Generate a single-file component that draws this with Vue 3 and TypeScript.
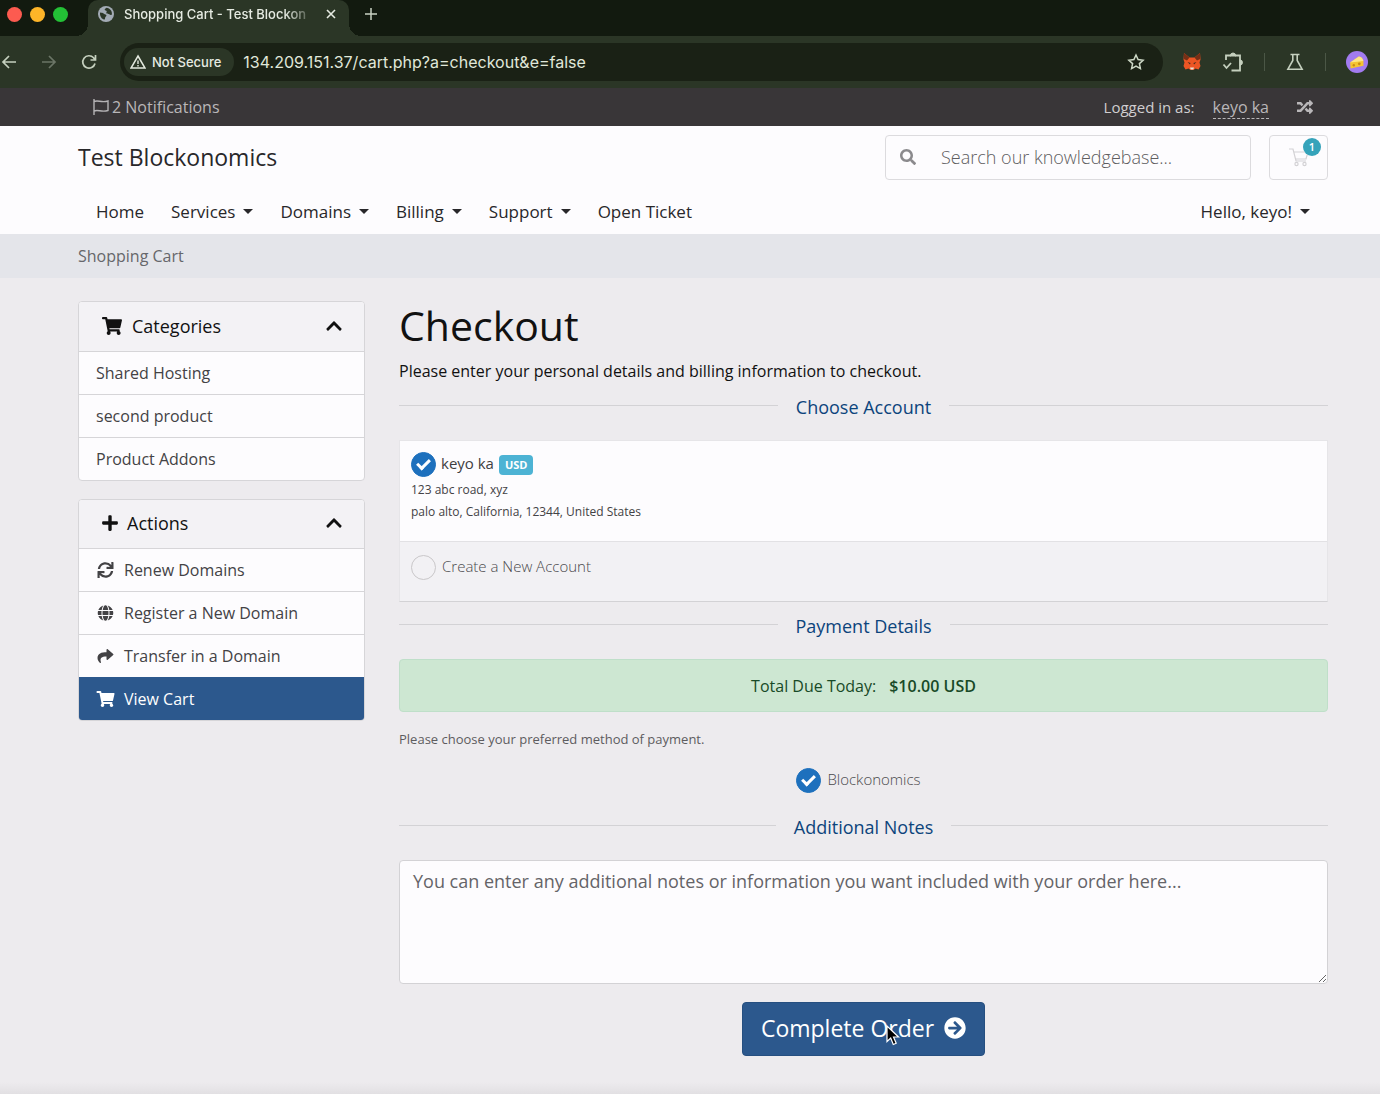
<script setup lang="ts">
import { ref } from 'vue'

interface Glyph {
  box: string
  d: string
}

interface NavItem {
  label: string
  menu: boolean
}

interface ActionItem {
  label: string
  icon: string
  active: boolean
}

const glyphs: Record<string, Glyph> = {
  cart: {
    box: '0 0 576 512',
    d: 'M528.12 301.319l47.273-208C578.806 78.301 567.391 64 551.99 64H159.208l-9.166-44.81C147.758 8.021 137.93 0 126.529 0H24C10.745 0 0 10.745 0 24v16c0 13.255 10.745 24 24 24h69.883l70.248 343.435C147.325 417.1 136 435.222 136 456c0 30.928 25.072 56 56 56s56-25.072 56-56c0-15.674-6.447-29.835-16.824-40h209.647C430.447 426.165 424 440.326 424 456c0 30.928 25.072 56 56 56s56-25.072 56-56c0-22.172-12.888-41.332-31.579-50.405l5.517-24.276c3.413-15.018-8.002-29.319-23.403-29.319H218.117l-6.545-32h293.145c11.206 0 20.92-7.754 23.403-18.681z',
  },
  plus: {
    box: '0 0 448 512',
    d: 'M416 208H272V64c0-17.67-14.33-32-32-32h-32c-17.67 0-32 14.33-32 32v144H32c-17.67 0-32 14.33-32 32v32c0 17.67 14.33 32 32 32h144v144c0 17.67 14.33 32 32 32h32c17.67 0 32-14.33 32-32V304h144c17.67 0 32-14.33 32-32v-32c0-17.67-14.33-32-32-32z',
  },
  chevron: {
    box: '0 0 448 512',
    d: 'M240.971 130.524l194.343 194.343c9.373 9.373 9.373 24.569 0 33.941l-22.667 22.667c-9.357 9.357-24.522 9.375-33.901.04L224 227.495 69.255 381.516c-9.379 9.335-24.544 9.317-33.901-.04l-22.667-22.667c-9.373-9.373-9.373-24.569 0-33.941L207.03 130.525c9.372-9.373 24.568-9.373 33.941-.001z',
  },
  sync: {
    box: '0 0 512 512',
    d: 'M440.65 12.57l4 82.77A247.16 247.16 0 0 0 255.83 8C134.73 8 33.91 94.92 12.29 209.82A12 12 0 0 0 24.09 224h49.05a12 12 0 0 0 11.67-9.26 175.91 175.91 0 0 1 317-56.94l-101.46-4.86a12 12 0 0 0-12.57 12v47.41a12 12 0 0 0 12 12H500a12 12 0 0 0 12-12V12a12 12 0 0 0-12-12h-47.37a12 12 0 0 0-11.98 12.57zM255.83 432a175.61 175.61 0 0 1-146-77.8l101.8 4.87a12 12 0 0 0 12.57-12v-47.4a12 12 0 0 0-12-12H12a12 12 0 0 0-12 12V500a12 12 0 0 0 12 12h47.35a12 12 0 0 0 12-12.6l-4.15-82.57A247.17 247.17 0 0 0 255.83 504c121.11 0 221.93-86.92 243.55-201.82a12 12 0 0 0-11.8-14.18h-49.05a12 12 0 0 0-11.67 9.26A175.86 175.86 0 0 1 255.83 432z',
  },
  globe: {
    box: '0 0 496 512',
    d: 'M336.5 160C322 70.7 287.8 8 248 8s-74 62.7-88.5 152h177zM152 256c0 22.2 1.2 43.5 3.3 64h185.3c2.1-20.5 3.3-41.8 3.3-64s-1.2-43.5-3.3-64H155.3c-2.1 20.5-3.3 41.8-3.3 64zm324.7-96c-28.6-67.9-86.5-120.4-158-141.6 24.4 33.8 41.2 84.7 50 141.6h108zM177.2 18.4C105.8 39.6 47.8 92.1 19.3 160h108c8.7-56.9 25.5-107.8 49.9-141.6zM487.4 192H372.7c2.1 21 3.3 42.5 3.3 64s-1.2 43-3.3 64h114.6c5.5-20.5 8.6-41.8 8.6-64s-3.1-43.5-8.5-64zM120 256c0-21.5 1.2-43 3.3-64H8.6C3.2 212.5 0 233.8 0 256s3.2 43.5 8.6 64h114.6c-2-21-3.2-42.5-3.2-64zm39.5 96c14.5 89.3 48.7 152 88.5 152s74-62.7 88.5-152h-177zm159.3 141.6c71.4-21.2 129.4-73.7 158-141.6h-108c-8.8 56.9-25.6 107.8-50 141.6zM19.3 352c28.6 67.9 86.5 120.4 158 141.6-24.4-33.8-41.2-84.7-50-141.6h-108z',
  },
  share: {
    box: '0 0 512 512',
    d: 'M503.691 189.836L327.687 37.851C312.281 24.546 288 35.347 288 56.015v80.053C127.371 137.907 0 170.1 0 322.326c0 61.441 39.581 122.309 83.333 154.132 13.653 9.931 33.111-2.533 28.077-18.631C66.066 312.814 132.917 274.316 288 272.085V360c0 20.7 24.3 31.453 39.687 18.164l176.004-152c11.071-9.562 11.086-26.753 0-36.328z',
  },
  search: {
    box: '0 0 512 512',
    d: 'M505 442.7L405.3 343c-4.5-4.5-10.6-7-17-7H372c27.6-35.3 44-79.7 44-128C416 93.1 322.9 0 208 0S0 93.1 0 208s93.1 208 208 208c48.3 0 92.7-16.4 128-44v16.3c0 6.4 2.5 12.5 7 17l99.7 99.7c9.4 9.4 24.6 9.4 33.9 0l28.3-28.3c9.4-9.4 9.4-24.6.1-34zM208 336c-70.7 0-128-57.2-128-128 0-70.7 57.2-128 128-128 70.7 0 128 57.2 128 128 0 70.7-57.2 128-128 128z',
  },
  random: {
    box: '0 0 512 512',
    d: 'M504.971 359.029c9.373 9.373 9.373 24.569 0 33.941l-80 79.984c-15.01 15.01-40.971 4.49-40.971-16.971V416h-58.785a12.004 12.004 0 0 1-8.773-3.812l-70.556-75.596 53.333-57.143L352 336h32v-39.981c0-21.438 25.943-31.998 40.971-16.971l80 79.981zM12 176h84l52.781 56.551 53.333-57.143-70.556-75.596A11.999 11.999 0 0 0 122.785 96H12c-6.627 0-12 5.373-12 12v56c0 6.627 5.373 12 12 12zm372 0v39.984c0 21.46 25.961 31.98 40.971 16.971l80-79.984c9.373-9.373 9.373-24.569 0-33.941l-80-79.981C409.943 24.021 384 34.582 384 56.019V96h-58.785a12.004 12.004 0 0 0-8.773 3.812L96 336H12c-6.627 0-12 5.373-12 12v56c0 6.627 5.373 12 12 12h110.785c3.326 0 6.503-1.381 8.773-3.812L352 176h32z',
  },
  arrow: {
    box: '0 0 512 512',
    d: 'M256 8c137 0 248 111 248 248S393 504 256 504 8 393 8 256 119 8 256 8zm-28.9 143.6l75.5 72.4H120c-13.3 0-24 10.7-24 24v16c0 13.3 10.7 24 24 24h182.6l-75.5 72.4c-9.7 9.3-9.9 24.8-.4 34.3l11 10.9c9.4 9.4 24.6 9.4 33.9 0L404.3 273c9.4-9.4 9.4-24.6 0-33.9L271.6 106.3c-9.4-9.4-24.6-9.4-33.9 0l-11 10.9c-9.5 9.6-9.3 25.1.4 34.4z',
  },
}

const navItems: NavItem[] = [
  { label: 'Home', menu: false },
  { label: 'Services', menu: true },
  { label: 'Domains', menu: true },
  { label: 'Billing', menu: true },
  { label: 'Support', menu: true },
  { label: 'Open Ticket', menu: false },
]

const categories: string[] = ['Shared Hosting', 'second product', 'Product Addons']

const actions: ActionItem[] = [
  { label: 'Renew Domains', icon: 'sync', active: false },
  { label: 'Register a New Domain', icon: 'globe', active: false },
  { label: 'Transfer in a Domain', icon: 'share', active: false },
  { label: 'View Cart', icon: 'cart', active: true },
]

const address = ref('134.209.151.37/cart.php?a=checkout&e=false')
const search = ref('')
const notes = ref('')
const account = ref('existing')
const payment = ref('blockonomics')
</script>

<template>
  <div class="window">
    <header class="browser">
      <div class="tabstrip">
        <div class="lights">
          <span class="light red"></span>
          <span class="light amber"></span>
          <span class="light green"></span>
        </div>
        <div class="tab">
          <svg class="favicon" viewBox="0 0 16 16" aria-hidden="true">
            <circle cx="8" cy="8" r="8" fill="#a3abb5" />
            <path d="M2 6.500c1.500.3 3 .2 4 1.300.8.9 2.200.4 2.400 1.400.2 1-1.200 1.300-1.200 2.300 0 .9-.3 1.500-.9 2.200C3.800 13 1.700 10.500 2 6.500zM8.500 1.800c-.9.9-2 1-1.800 2 .2.900 1.700.5 2 1.500.2.900-.7 1.300-.3 2 .6.900 2 .2 2.900 1 .7.6 1.300.7 2.600.5C14.400 5 12 2.200 8.500 1.800z" fill="#2c3728" />
          </svg>
          <span class="tab-title">Shopping Cart - Test Blockon</span>
          <button class="plain" type="button" aria-label="Close tab">
            <svg class="i12" viewBox="0 0 12 12" aria-hidden="true"><path d="M2 2l8 8M10 2l-8 8" fill="none" stroke="#e6ebe2" stroke-width="1.600" /></svg>
          </button>
        </div>
        <button class="plain new-tab" type="button" aria-label="New tab">
          <svg class="i12" viewBox="0 0 12 12" aria-hidden="true"><path d="M6 0v12M0 6h12" fill="none" stroke="#c9d2c4" stroke-width="1.500" /></svg>
        </button>
      </div>

      <div class="toolbar">
        <div class="history">
          <button class="plain" type="button" aria-label="Back">
            <svg class="i18" viewBox="0 0 18 18" aria-hidden="true"><path d="M16 9H3M9 3L3 9l6 6" fill="none" stroke="#c5d0be" stroke-width="1.700" /></svg>
          </button>
          <button class="plain" type="button" aria-label="Forward">
            <svg class="i18" viewBox="0 0 18 18" aria-hidden="true"><path d="M2 9h13M9 3l6 6-6 6" fill="none" stroke="#6b7566" stroke-width="1.700" /></svg>
          </button>
          <button class="plain" type="button" aria-label="Reload">
            <svg class="i18" viewBox="0 0 18 18" aria-hidden="true"><path d="M15 10.500A6.200 6.200 0 1 1 13.600 4.800L15.300 6.600M15.500 2v5h-5" fill="none" stroke="#c5d0be" stroke-width="1.700" /></svg>
          </button>
        </div>

        <div class="omnibox">
          <button class="plain secure" type="button">
            <svg class="i16" viewBox="0 0 16 16" aria-hidden="true">
              <path d="M8 2L15 14H1z" fill="none" stroke="#e3e9de" stroke-width="1.500" />
              <path d="M8 6.500v3.600M8 11v1.500" stroke="#e3e9de" stroke-width="1.400" />
            </svg>
            Not Secure
          </button>
          <input v-model="address" class="address" type="text" aria-label="Address" />
          <button class="plain" type="button" aria-label="Bookmark">
            <svg class="i18" viewBox="0 0 18 18" aria-hidden="true"><path d="M9 2l2.100 4.600 5 .6-3.700 3.400 1 5L9 13.100l-4.400 2.500 1-5L1.900 7.200l5-.6z" fill="none" stroke="#cdd8c6" stroke-width="1.500" /></svg>
          </button>
        </div>

        <div class="extensions">
          <svg class="i20" viewBox="0 0 20 20" aria-hidden="true">
            <path d="M2 1l5.500 4.500h5L18 1l.5 6.500-1 3 1 3.500-2 3.500-3-1-2 1.500h-3l-2-1.500-3 1-2-3.500 1-3.500-1-3z" fill="#ec5524" />
            <path d="M2 1l5.500 4.500L5 8.500 1.800 7zM18 1l-5.500 4.500L15 8.500 18.200 7z" fill="#762f16" />
            <path d="M5.500 10l3 1-.5 1.500zM14.500 10l-3 1 .5 1.500z" fill="#3b2a20" />
            <path d="M8 15.500h4l-.7 2H8.700z" fill="#e8e3da" />
          </svg>
          <svg class="i22" viewBox="0 0 22 22" aria-hidden="true">
            <path d="M4 9V4.500h4.700M13.300 4.500H18V9M18 14v5.500H9.500" fill="none" stroke="#c5d0be" stroke-width="1.800" />
            <path d="M8.500 4.500a2.500 2.500 0 0 1 5 0zM18 9a2.500 2.500 0 0 1 0 5z" fill="#c5d0be" stroke="#c5d0be" />
            <path d="M8 4.500h6M18 8.500v6" fill="none" stroke="#c5d0be" stroke-width="1.800" />
            <path d="M1.500 13.500l3 3.500 4.500-5" fill="none" stroke="#c5d0be" stroke-width="1.800" />
          </svg>
          <span class="rule"></span>
          <svg class="i20" viewBox="0 0 20 20" aria-hidden="true">
            <path d="M5.500 2.500h9M7.800 2.500v6L2.900 17.200h14.200L12.200 8.500v-6" fill="none" stroke="#c5d0be" stroke-width="1.600" />
          </svg>
          <span class="rule"></span>
          <svg class="i22" viewBox="0 0 24 24" aria-hidden="true">
            <circle cx="12" cy="12" r="12" fill="#a27bf0" />
            <path d="M4.500 12.500L14 6c3 .5 4.500 2.500 5 5v5L5 19z" fill="#f5c431" />
            <path d="M4.500 12.500L14 6c3 .5 4.500 2.500 5 5z" fill="#fce588" />
            <circle cx="8.500" cy="15.500" r="1.300" fill="#c98a17" />
            <circle cx="14.500" cy="14" r="1.500" fill="#c98a17" />
          </svg>
        </div>
      </div>
    </header>

    <div class="topbar">
      <a class="notifications" href="#">
        <svg class="i16" viewBox="0 0 16 16" aria-hidden="true"><path d="M1 0v16M1 2.500c4-2 7 1.500 14-.5v9.500c-7 2-10-1.500-14 .5" fill="none" stroke="#b5b3b5" stroke-width="1.400" /></svg>
        2 Notifications
      </a>
      <div class="session">
        <span>Logged in as:</span>
        <a class="user" href="#">keyo ka</a>
        <a class="switch" href="#" aria-label="Switch account">
          <svg class="i16" :viewBox="glyphs.random.box" aria-hidden="true"><path :d="glyphs.random.d" /></svg>
        </a>
      </div>
    </div>

    <div class="masthead">
      <div class="brand-row">
        <a class="brand" href="#">Test Blockonomics</a>
        <form class="search" @submit.prevent>
          <svg class="i16" :viewBox="glyphs.search.box" aria-hidden="true"><path :d="glyphs.search.d" /></svg>
          <input v-model="search" type="text" placeholder="Search our knowledgebase..." aria-label="Search our knowledgebase" />
        </form>
        <a class="cart-button" href="#" aria-label="Shopping cart">
          <svg class="i20" viewBox="0 0 20 20" aria-hidden="true">
            <path d="M0 2h4l3 12h10M4.700 5H19l-2 7H6.500" fill="none" stroke="#d3d2d5" stroke-width="1.200" />
            <circle cx="7.500" cy="17" r="1.600" fill="none" stroke="#d3d2d5" stroke-width="1.200" />
            <circle cx="15.500" cy="17" r="1.600" fill="none" stroke="#d3d2d5" stroke-width="1.200" />
          </svg>
          <span class="count">1</span>
        </a>
      </div>
      <nav class="nav">
        <a v-for="item in navItems" :key="item.label" href="#" :class="{ menu: item.menu }">{{ item.label }}</a>
        <a class="menu hello" href="#">Hello, keyo!</a>
      </nav>
    </div>

    <div class="breadcrumb">Shopping Cart</div>

    <div class="content">
      <aside class="sidebar">
        <section class="card">
          <h2 class="card-head">
            <svg class="i20" :viewBox="glyphs.cart.box" aria-hidden="true"><path :d="glyphs.cart.d" /></svg>
            Categories
            <svg class="i18 chevron" :viewBox="glyphs.chevron.box" aria-hidden="true"><path :d="glyphs.chevron.d" /></svg>
          </h2>
          <a v-for="name in categories" :key="name" class="item" href="#">{{ name }}</a>
        </section>

        <section class="card">
          <h2 class="card-head tight">
            <svg class="i18" :viewBox="glyphs.plus.box" aria-hidden="true"><path :d="glyphs.plus.d" /></svg>
            Actions
            <svg class="i18 chevron" :viewBox="glyphs.chevron.box" aria-hidden="true"><path :d="glyphs.chevron.d" /></svg>
          </h2>
          <a v-for="item in actions" :key="item.label" class="item" :class="{ active: item.active }" href="#">
            <svg class="item-icon" :viewBox="glyphs[item.icon].box" aria-hidden="true"><path :d="glyphs[item.icon].d" /></svg>
            {{ item.label }}
          </a>
        </section>
      </aside>

      <main class="main">
        <h1>Checkout</h1>
        <p class="lead">Please enter your personal details and billing information to checkout.</p>

        <h3 class="heading">Choose Account</h3>
        <div class="accounts">
          <label class="account chosen">
            <span class="choice">
              <input v-model="account" class="radio" type="radio" name="account" value="existing" />
              <span class="choice-text">keyo ka</span>
              <span class="currency">USD</span>
            </span>
            <span class="place">123 abc road, xyz</span>
            <span class="place">palo alto, California, 12344, United States</span>
          </label>
          <label class="account create">
            <span class="choice">
              <input v-model="account" class="radio" type="radio" name="account" value="new" />
              <span class="choice-text">Create a New Account</span>
            </span>
          </label>
        </div>

        <h3 class="heading">Payment Details</h3>
        <div class="total">Total Due Today: <strong>$10.00 USD</strong></div>
        <p class="hint">Please choose your preferred method of payment.</p>
        <label class="choice gateway">
          <input v-model="payment" class="radio" type="radio" name="payment" value="blockonomics" />
          <span class="choice-text">Blockonomics</span>
        </label>

        <h3 class="heading">Additional Notes</h3>
        <textarea v-model="notes" class="notes" aria-label="Additional notes" placeholder="You can enter any additional notes or information you want included with your order here..."></textarea>

        <button class="complete" type="button">
          Complete Order
          <svg class="i22" :viewBox="glyphs.arrow.box" aria-hidden="true"><path :d="glyphs.arrow.d" /></svg>
          <svg class="pointer" viewBox="0 0 14 21" aria-hidden="true">
            <path d="M1 1v15.500l3.700-3.500 2.600 6.500 2.900-1.200-2.700-6.300h5z" fill="#000" stroke="#fff" stroke-width="1.200" />
          </svg>
        </button>
      </main>
    </div>
  </div>
</template>

<style>
body {
  margin: 0;
  background: #edebee;
}
</style>

<style scoped>
* {
  box-sizing: border-box;
}

.window {
  min-height: 100vh;
  background: linear-gradient(to top, #e2e0e3, #edebee 12px);
  color: #111;
  font-family: 'Open Sans', 'Noto Sans', sans-serif;
  font-size: 16px;
  line-height: 24px;
}

a {
  color: inherit;
  text-decoration: none;
}

svg {
  display: block;
  flex: none;
  fill: currentColor;
}

.i12 { width: 12px; height: 12px; }
.i16 { width: 16px; height: 16px; }
.i18 { width: 18px; height: 18px; }
.i20 { width: 20px; height: 20px; }
.i22 { width: 22px; height: 22px; }

.plain {
  padding: 0;
  border: 0;
  background: none;
  color: inherit;
  font: inherit;
}

/* Browser chrome */
.browser {
  color: #e6ebe2;
  font-family: Inter, 'Liberation Sans', sans-serif;
}

.tabstrip {
  display: flex;
  height: 36px;
  background: #121a0f;
}

.lights {
  display: flex;
  gap: 8px;
  padding: 7px 20px 0 7px;
}

.light {
  width: 15px;
  height: 15px;
  border-radius: 50%;
}

.red { background: #fc5b50; }
.amber { background: #fdb528; }
.green { background: #23c136; }

.tab {
  position: relative;
  display: flex;
  gap: 10px;
  align-items: center;
  width: 261px;
  padding: 0 12px 8px 10px;
  border-radius: 10px 10px 0 0;
  background: #2b3626;
}

.tab::before,
.tab::after {
  position: absolute;
  bottom: 0;
  width: 12px;
  height: 12px;
  content: '';
}

.tab::before {
  right: 100%;
  background: radial-gradient(circle at 0 0, transparent 12px, #2b3626 12px);
}

.tab::after {
  left: 100%;
  background: radial-gradient(circle at 100% 0, transparent 12px, #2b3626 12px);
}

.favicon {
  width: 16px;
  height: 16px;
}

.tab-title {
  flex: 1;
  font-size: 13px;
  font-weight: 500;
  white-space: nowrap;
  mask-image: linear-gradient(to left, transparent, #000 30px);
}

.new-tab {
  padding: 0 16px 8px;
}

.toolbar {
  display: flex;
  align-items: center;
  height: 52px;
  padding: 0 12px 0 0;
  background: #2b3626;
}

.history {
  display: flex;
  gap: 22px;
  width: 120px;
}

.omnibox {
  display: flex;
  flex: 1;
  align-items: center;
  height: 38px;
  padding: 0 18px 0 4px;
  border-radius: 19px;
  background: #1a2115;
}

.secure {
  display: flex;
  gap: 6px;
  align-items: center;
  height: 28px;
  padding: 0 13px 0 6px;
  border-radius: 14px;
  background: #2b3626;
  font-size: 13px;
  font-weight: 500;
}

.address {
  flex: 1;
  min-width: 0;
  padding: 0 9px;
  border: 0;
  outline: 0;
  background: none;
  color: #e0e8da;
  font: inherit;
}

.extensions {
  display: flex;
  gap: 20px;
  align-items: center;
  padding-left: 19px;
}

.rule {
  width: 1px;
  height: 18px;
  background: #4b5746;
}

/* Site header */
.topbar {
  display: flex;
  align-items: center;
  justify-content: space-between;
  height: 38px;
  padding: 0 67px 0 93px;
  background: #393638;
  color: #b9b7b9;
}

.notifications {
  display: flex;
  gap: 3px;
  align-items: center;
}

.session {
  display: flex;
  gap: 18px;
  align-items: center;
}

.session span {
  color: #d0ced0;
  font-size: 15px;
}

.user {
  border-bottom: 1px dashed #b9b7b9;
  line-height: 22px;
}

.switch {
  margin-left: 10px;
}

.masthead {
  background: #fdfcfe;
  color: #28272a;
}

.brand-row {
  display: flex;
  gap: 18px;
  align-items: center;
  height: 63px;
  padding: 0 52px 1px 78px;
}

.brand {
  flex: 1;
  font-size: 23px;
}

.search {
  display: flex;
  gap: 25px;
  align-items: center;
  width: 366px;
  height: 45px;
  padding: 0 14px;
  border: 1px solid #dcdbde;
  border-radius: 4px;
  color: #8b8a8d;
}

.search input {
  flex: 1;
  min-width: 0;
  padding: 0;
  border: 0;
  outline: 0;
  background: none;
  font: inherit;
  font-size: 18px;
}

.search input::placeholder {
  color: #5e5d60;
  font-weight: 300;
  opacity: 1;
}

.cart-button {
  position: relative;
  display: flex;
  align-items: center;
  justify-content: center;
  width: 59px;
  height: 45px;
  border: 1px solid #dcdbde;
  border-radius: 4px;
}

.count {
  position: absolute;
  top: 2px;
  right: 6px;
  width: 18px;
  height: 18px;
  border-radius: 50%;
  background: #35a3ba;
  color: #fff;
  font-size: 11px;
  font-weight: 600;
  line-height: 18px;
  text-align: center;
}

.nav {
  display: flex;
  gap: 27px;
  align-items: center;
  height: 45px;
  padding: 0 70px 0 96px;
  font-size: 17px;
}

.menu {
  display: flex;
  gap: 8px;
  align-items: center;
}

.menu::after {
  border: 5px solid transparent;
  border-top-color: currentColor;
  border-bottom: 0;
  content: '';
}

.hello {
  margin-left: auto;
}

.breadcrumb {
  height: 44px;
  padding-left: 78px;
  background: #e4e5ea;
  color: #66676b;
  line-height: 45px;
}

/* Columns */
.content {
  display: flex;
  gap: 34px;
  align-items: flex-start;
  padding: 23px 52px 38px 78px;
}

.sidebar {
  flex: none;
  width: 287px;
}

.card {
  overflow: hidden;
  margin-bottom: 18px;
  border: 1px solid #d6d5d8;
  border-radius: 4px;
  background: #fdfcfe;
}

.card-head {
  display: flex;
  gap: 10px;
  align-items: center;
  height: 49px;
  margin: 0;
  padding: 0 21px 2px 23px;
  background: #f3f2f5;
  font-size: 18px;
  font-weight: 400;
}

.tight {
  gap: 8px;
  height: 48px;
  padding-left: 22px;
}

.chevron {
  margin-left: auto;
}

.item {
  display: flex;
  gap: 9px;
  align-items: center;
  height: 43px;
  padding: 0 17px;
  border-top: 1px solid #d6d5d8;
  color: #434245;
}

.item-icon {
  width: 19px;
  height: 16px;
}

.active {
  border-color: #2c588d;
  background: #2c588d;
  color: #fff;
}

.main {
  display: flex;
  flex: 1;
  flex-direction: column;
  min-width: 0;
}

h1 {
  margin: 0;
  font-size: 41px;
  font-weight: 400;
  line-height: 48px;
}

.lead {
  margin: 10px 0 12px;
}

.heading {
  display: flex;
  gap: 18px;
  align-items: center;
  margin: 0;
  color: #0c447c;
  font-size: 18px;
  font-weight: 400;
  line-height: 24px;
}

.heading::before,
.heading::after {
  flex: 1;
  height: 1px;
  margin-bottom: 4px;
  background: #d3d2d5;
  content: '';
}

.accounts {
  margin: 21px 0 12px;
  border: 1px solid #e6e5e8;
  border-bottom-color: #d3d2d5;
}

.account {
  display: flex;
  flex-direction: column;
  padding: 11px;
}

.chosen {
  height: 100px;
  background: #fdfcfe;
}

.create {
  height: 60px;
  padding-top: 13px;
  border-top: 1px solid #e2e1e4;
  background: #f2f1f4;
}

.choice {
  display: flex;
  gap: 6px;
  align-items: center;
  color: #4a494c;
  font-size: 15px;
}

.choice-text {
  padding-bottom: 3px;
  line-height: 22px;
}

.chosen .choice {
  gap: 5px;
  margin-bottom: 2px;
  color: #3f3e41;
}

.create .choice,
.gateway {
  font-weight: 300;
}

.currency {
  height: 20px;
  padding: 0 6px;
  border-radius: 4px;
  background: #4db3d4;
  color: #fff;
  font-size: 11px;
  font-weight: 700;
  line-height: 20px;
}

.place {
  color: #434245;
  font-size: 12px;
  line-height: 22px;
}

.radio {
  display: grid;
  flex: none;
  width: 25px;
  height: 25px;
  margin: 0;
  border: 1px solid #c9c7c9;
  border-radius: 50%;
  appearance: none;
  place-items: center;
}

.radio:checked {
  border-color: #1d70bd;
  background: #1d70bd;
}

.radio:checked::after {
  width: 10px;
  height: 5px;
  margin-bottom: 4px;
  border: solid #fff;
  border-width: 0 0 3px 3px;
  content: '';
  rotate: -45deg;
}

.total {
  display: flex;
  gap: 13px;
  align-items: center;
  justify-content: center;
  height: 53px;
  margin: 21px 0 16px;
  border: 1px solid #bfdfc9;
  border-radius: 4px;
  background: #cde7d2;
  color: #184a27;
}

.total strong {
  font-weight: 600;
}

.hint {
  margin: 0 0 18px;
  color: #5d5c5f;
  font-size: 13px;
  line-height: 22px;
}

.gateway {
  justify-content: center;
  margin-bottom: 22px;
  padding-right: 10px;
}

.notes {
  display: block;
  width: 100%;
  height: 124px;
  margin: 21px 0 18px;
  padding: 8px 13px;
  border: 1px solid #d3d2d5;
  border-radius: 4px;
  outline: 0;
  background: #fdfcfe;
  font: inherit;
  font-size: 18px;
  resize: vertical;
}

.notes::placeholder {
  color: #656468;
  opacity: 1;
}

.complete {
  position: relative;
  display: flex;
  gap: 10px;
  align-items: center;
  align-self: center;
  height: 54px;
  padding: 0 18px 2px;
  border: 1px solid #264f80;
  border-radius: 4px;
  background: #2c588d;
  color: #fff;
  font: inherit;
  font-size: 23px;
}

.pointer {
  position: absolute;
  top: 22px;
  left: 143px;
  width: 14px;
  height: 21px;
}
</style>
